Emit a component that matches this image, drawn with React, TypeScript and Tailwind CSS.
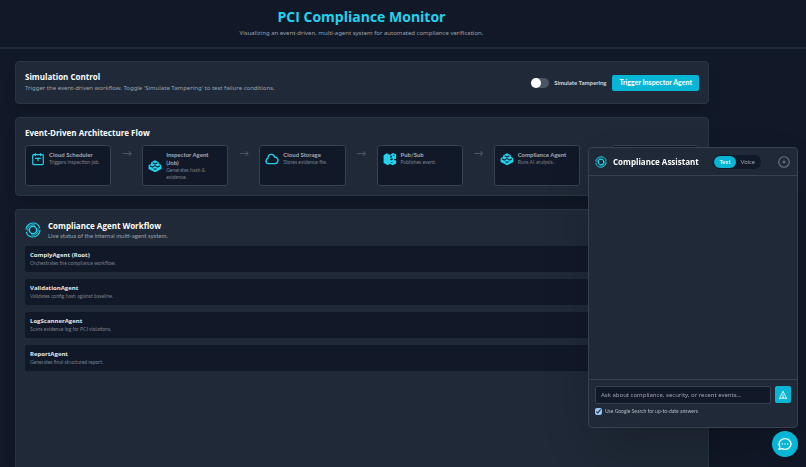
import { useState } from 'react'
import type { ReactNode } from 'react'

interface FlowStep {
  name: string
  description: string
  icon: ReactNode
}

interface Agent {
  name: string
  description: string
}

function CalendarIcon() {
  return (
    <svg viewBox="0 0 24 24" className="size-3.5 shrink-0 fill-none stroke-[#22d3ee] stroke-2" aria-hidden="true">
      <rect x="3" y="4.5" width="18" height="17" rx="1.5" />
      <path d="M7.5 2v5M16.500 2v5M7 11h10M12 11v5" />
    </svg>
  )
}

function BoxIcon() {
  return (
    <svg viewBox="0 0 24 24" className="size-3.5 shrink-0" aria-hidden="true">
      <path className="fill-[#22d3ee]" d="M12 2 18.500 5.500V8L23 10.500V17l-11 5.500L1 17v-6.500L5.500 8V5.500z" />
      <path className="fill-none stroke-[#111827]" strokeWidth="1.800" d="m8 6.500 4 2 4-2M3.500 11.500 7.500 14l4.500-3 4.500 3 4-2.500M9.500 16.500l2.500 1.500 2.500-1.500" />
    </svg>
  )
}

function CloudIcon() {
  return (
    <svg viewBox="1.500 1.500 21 21" className="size-3.5 shrink-0 fill-none stroke-[#22d3ee] stroke-2" aria-hidden="true">
      <path
        strokeLinecap="round"
        strokeLinejoin="round"
        d="M3 15a4 4 0 0 0 4 4h9a5 5 0 1 0-.1-9.999 5.002 5.002 0 1 0-9.780 2.096A4.001 4.001 0 0 0 3 15z"
      />
    </svg>
  )
}

function PubSubIcon() {
  return (
    <svg viewBox="0 0 24 24" className="size-3.5 shrink-0" aria-hidden="true">
      <path className="fill-[#22d3ee]" d="M1 5.500 6.500 2 12 5l5-3.500L22.500 4v7L20 13l2.500 2v5L16 22.500 12 20l-4 2.500L1 19z" />
      <path className="fill-[#111827]" d="M12.500 6.500h3v3h-3zM17.500 4.500h2v2h-2zM12 12l4-1.500 1 2.500-3 1.500zM13.500 17h2.500v2h-2.500zM18.500 12l3.500 1-3 1.500z" />
    </svg>
  )
}

function AssistantIcon({ className }: { className: string }) {
  return (
    <svg viewBox="0 0 24 24" className={className} aria-hidden="true">
      <g className="fill-none stroke-[#22d3ee]">
        <circle cx="12" cy="12" r="10.500" strokeWidth="1.800" strokeDasharray="30 3" />
        <circle cx="12" cy="12" r="5.500" strokeWidth="2.200" />
        <path strokeWidth="1.200" d="M4.200 14A8 8 0 0 1 15 4.600M19.800 10A8 8 0 0 1 9 19.400" />
      </g>
    </svg>
  )
}

const steps: FlowStep[] = [
  { name: 'Cloud Scheduler', description: 'Triggers inspection job.', icon: <CalendarIcon /> },
  { name: 'Inspector Agent (Job)', description: 'Generates hash & evidence.', icon: <BoxIcon /> },
  { name: 'Cloud Storage', description: 'Stores evidence file.', icon: <CloudIcon /> },
  { name: 'Pub/Sub', description: 'Publishes event.', icon: <PubSubIcon /> },
  { name: 'Compliance Agent', description: 'Runs AI analysis.', icon: <BoxIcon /> },
]

const agents: Agent[] = [
  { name: 'ComplyAgent (Root)', description: 'Orchestrates the compliance workflow.' },
  { name: 'ValidationAgent', description: 'Validates config hash against baseline.' },
  { name: 'LogScannerAgent', description: 'Scans evidence log for PCI violations.' },
  { name: 'ReportAgent', description: 'Generates final structured report.' },
]

function SectionTitle({ children }: { children: ReactNode }) {
  return <h2 className="font-['Open_Sans','Noto_Sans',sans-serif] text-[8px] leading-3 font-bold text-white">{children}</h2>
}

function SimulationControl() {
  const [tampering, setTampering] = useState(false)

  return (
    <section className="flex items-center justify-between rounded border border-[#2a3544] bg-[#1f2937] px-[9px] py-[9px] shadow-lg">
      <div>
        <SectionTitle>Simulation Control</SectionTitle>
        <p className="font-['Noto_Sans',sans-serif] text-[6px] leading-[11px] text-[#9ca3af]">
          Trigger the event-driven workflow. Toggle 'Simulate Tampering' to test failure conditions.
        </p>
      </div>
      <div className="flex items-center gap-1.5">
        <label className="flex items-center gap-[5px] text-[6px] font-bold text-[#d1d5db]">
          <input
            type="checkbox"
            role="switch"
            checked={tampering}
            onChange={(e) => setTampering(e.target.checked)}
            className="h-2.5 w-[18px] appearance-none rounded-full bg-[#4b5563] before:block before:size-2.5 before:rounded-full before:bg-white checked:bg-[#06b6d4] checked:before:translate-x-2"
          />
          Simulate Tampering
        </label>
        <button type="button" className="h-4 rounded-xs bg-[#06b6d4] px-[7px] text-[7px] font-bold text-white">
          Trigger Inspector Agent
        </button>
      </div>
    </section>
  )
}

function ArchitectureFlow() {
  return (
    <section className="rounded border border-[#2a3544] bg-[#1f2937] px-[9px] py-[9px] shadow-lg">
      <div className="mb-1.5">
        <SectionTitle>Event-Driven Architecture Flow</SectionTitle>
      </div>
      <ol className="flex items-stretch">
        {steps.map((step) => (
          <li key={step.name} className="flex min-w-0 flex-[117]">
            <div className="min-h-[41px] min-w-0 flex-1 rounded-[3px] border border-[#374151] bg-[#111827] pt-[5px] pr-2 pb-1 pl-[5px]">
              <div className="flex items-center gap-1">
                {step.icon}
                <div>
                  <h3 className="text-[6px] leading-2 font-bold text-[#a3a9b5]">{step.name}</h3>
                  <p className="text-[5px] leading-[7px] text-[#7b8290]">{step.description}</p>
                </div>
              </div>
            </div>
            <span className="w-[31px] shrink-0 text-center font-['DejaVu_Sans',sans-serif] text-[12px] leading-4 text-[#4b5563]">→</span>
          </li>
        ))}
        <li className="min-w-0 flex-[86] rounded-[3px] border border-[#374151] bg-[#111827]" />
      </ol>
    </section>
  )
}

function AgentWorkflow() {
  return (
    <section className="flex-1 rounded-t border border-b-0 border-[#2a3544] bg-[#1f2937] px-[9px] py-2.5 shadow-lg">
      <div className="mb-1.5 flex items-center gap-[7px]">
        <AssistantIcon className="size-4 shrink-0" />
        <div>
          <SectionTitle>Compliance Agent Workflow</SectionTitle>
          <p className="text-[6px] leading-2 text-[#9ca3af]">Live status of the internal multi-agent system.</p>
        </div>
      </div>
      <ul className="flex flex-col gap-[7px]">
        {agents.map((agent) => (
          <li key={agent.name} className="rounded-xs bg-[#111827] px-[5px] py-[5px]">
            <h3 className="font-['Open_Sans','Noto_Sans',sans-serif] text-[6px] leading-[9px] font-bold text-[#e5e7eb]">{agent.name}</h3>
            <p className="text-[5px] leading-[7px] text-[#7b8290]">{agent.description}</p>
          </li>
        ))}
      </ul>
    </section>
  )
}

function ChatPanel() {
  const [mode, setMode] = useState<'Text' | 'Voice'>('Text')
  const [search, setSearch] = useState(true)

  return (
    <aside className="fixed right-2 bottom-[39px] flex h-[281px] w-[210px] flex-col rounded border border-[#374151] bg-[#1f2937] shadow-2xl">
      <header className="flex h-7 items-center border-b border-[#374151] px-[6px]">
        <AssistantIcon className="mr-1.5 size-3 shrink-0" />
        <SectionTitle>Compliance Assistant</SectionTitle>
        <div className="ml-auto flex rounded-full bg-[#111827] p-px">
          {(['Text', 'Voice'] as const).map((item) => (
            <button
              key={item}
              type="button"
              onClick={() => setMode(item)}
              className={
                mode === item
                  ? 'h-3 rounded-full bg-[#06b6d4] px-[5px] text-[6px] text-white'
                  : 'h-3 rounded-full px-[5px] text-[6px] text-[#9ca3af]'
              }
            >
              {item}
            </button>
          ))}
        </div>
        <button type="button" aria-label="Close" className="ml-4 text-[#6b7280]">
          <svg viewBox="0 0 24 24" className="size-3.5 fill-none stroke-current stroke-2">
            <path d="m10 10 4 4M14 10l-4 4M21 12a9 9 0 1 1-18 0 9 9 0 0 1 18 0z" />
          </svg>
        </button>
      </header>
      <div className="flex-1" />
      <form className="h-12 border-t border-[#374151] p-1.5" onSubmit={(e) => e.preventDefault()}>
        <div className="flex gap-1">
          <input
            type="text"
            aria-label="Message"
            placeholder="Ask about compliance, security, or recent events..."
            className="h-[18px] min-w-0 flex-1 rounded-xs border border-[#374151] bg-[#111827] px-[5px] font-['Noto_Sans',sans-serif] text-[6px] text-white placeholder:text-[#9ca3af]"
          />
          <button type="submit" aria-label="Send" className="flex h-[17px] w-4 items-center justify-center rounded-xs bg-[#06b6d4] text-white">
            <svg viewBox="0 0 24 24" className="size-2.5 fill-none stroke-current stroke-2">
              <path strokeLinecap="round" strokeLinejoin="round" d="m12 19 9 2-9-18-9 18 9-2zm0 0v-8" />
            </svg>
          </button>
        </div>
        <label className="mt-[3px] flex items-center gap-[3px] text-[5px] leading-2 text-[#b4bac4]">
          <input type="checkbox" checked={search} onChange={(e) => setSearch(e.target.checked)} className="size-[7px] accent-[#93c5fd]" />
          Use Google Search for up-to-date answers
        </label>
      </form>
    </aside>
  )
}

export default function App() {
  return (
    <div className="flex h-screen flex-col overflow-hidden bg-[#111827] font-['Lato','Noto_Sans',sans-serif]">
      <header className="border-b-2 border-[#1f2937] pt-[7px] pr-[83px] pb-2 text-center">
        <h1 className="font-['Open_Sans','Noto_Sans',sans-serif] text-[14px] leading-5 font-bold text-[#22d3ee]">
          PCI Compliance Monitor
        </h1>
        <p className="font-['Noto_Sans',sans-serif] text-[6px] leading-3 text-[#9ca3af]">
          Visualizing an event-driven, multi-agent system for automated compliance verification.
        </p>
      </header>
      <main className="flex flex-1 flex-col gap-[13px] pt-3 pr-[97px] pl-[15px]">
        <SimulationControl />
        <ArchitectureFlow />
        <AgentWorkflow />
      </main>
      <ChatPanel />
      <button
        type="button"
        aria-label="Open chat"
        className="fixed right-2 bottom-[10px] flex size-[26px] items-center justify-center rounded-full bg-[#06b6d4] text-white shadow-lg"
      >
        <svg viewBox="0 0 24 24" className="size-4 fill-none stroke-current stroke-2">
          <path
            strokeLinecap="round"
            strokeLinejoin="round"
            d="M8 12h.01M12 12h.01M16 12h.01M21 12c0 4.418-4.030 8-9 8a9.863 9.863 0 0 1-4.255-.949L3 20l1.395-3.720C3.512 15.042 3 13.574 3 12c0-4.418 4.030-8 9-8s9 3.582 9 8z"
          />
        </svg>
      </button>
    </div>
  )
}
